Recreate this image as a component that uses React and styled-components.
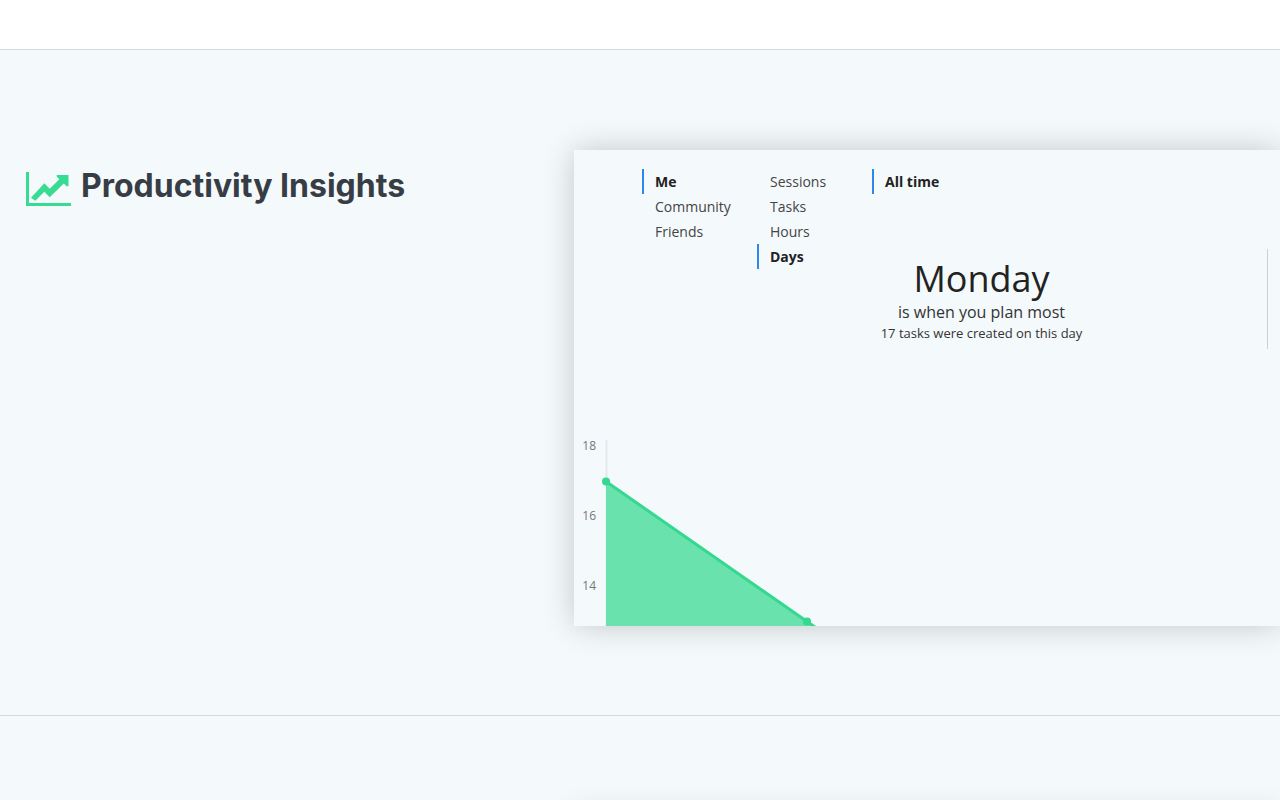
import React, { useState } from "react";
import styled, { createGlobalStyle } from "styled-components";

const filters = [
  { name: "people", options: ["Me", "Community", "Friends"], active: "Me" },
  {
    name: "metric",
    options: ["Sessions", "Tasks", "Hours", "Days"],
    active: "Days",
  },
  { name: "period", options: ["All time"], active: "All time" },
];

const axisLabels = [
  { value: 18, y: 20 },
  { value: 16, y: 90 },
  { value: 14, y: 160 },
];

const GlobalStyle = createGlobalStyle`
  * {
    box-sizing: border-box;
  }
  body {
    margin: 0;
    background-color: #f4f9fc;
    color: #222;
    font-family: "Open Sans", sans-serif;
  }
`;

const Page = styled.div`
  display: flex;
  flex-direction: column;
  height: 100vh;
  overflow: hidden;
`;

const TopBar = styled.header`
  flex: none;
  height: 49px;
  background-color: #fff;
`;

const Section = styled.section`
  flex: none;
  display: grid;
  grid-template-columns: 550px minmax(0, 1fr);
  align-items: start;
  padding: 100px 0 89px 24px;
  border-top: 1px solid #d5dce0;
`;

const Heading = styled.div`
  display: flex;
  align-items: flex-start;
  gap: 10px;
  padding: 14px 0 0 2px;

  svg {
    flex: none;
    margin-top: 8px;
  }
`;

const Title = styled.h2`
  margin: 0;
  color: #373d44;
  font-family: Inter, sans-serif;
  font-size: 32px;
  font-weight: 700;
  line-height: 44px;
`;

const Panel = styled.div`
  grid-column: 2;
  height: 476px;
  overflow: hidden;
  background-color: #f4f9fc;
  box-shadow: 0 0 30px rgba(0, 0, 0, 0.2);
`;

const Filters = styled.div`
  position: relative;
  z-index: 1;
  display: flex;
  align-items: flex-start;
  padding: 19px 0 0 68px;
`;

const FilterGroup = styled.div`
  display: flex;
  flex-direction: column;
  align-items: flex-start;
  width: 115px;
`;

const FilterButton = styled.button`
  height: 25px;
  padding: 0 0 0 11px;
  border: 0;
  border-left: 2px solid ${({ $active }) => ($active ? "#2f86eb" : "transparent")};
  background: none;
  color: ${({ $active }) => ($active ? "#222" : "#444")};
  font-family: inherit;
  font-size: 14px;
  font-weight: ${({ $active }) => ($active ? 700 : 400)};
  line-height: 25px;
  cursor: pointer;
`;

/* the summary starts level with the last filter row */
const Summary = styled.div`
  height: 100px;
  margin: -20px 12px 0 122px;
  padding-top: 5px;
  border-right: 1px solid #ccd1d4;
  text-align: center;

  p {
    margin: 0;
  }
`;

const SummaryDay = styled.p`
  font-size: 36px;
  line-height: 50px;
`;

const SummaryText = styled.p`
  color: #333;
  font-size: 16px;
  line-height: 16px;
`;

const SummaryNote = styled.p`
  color: #333;
  font-size: 13px;
  line-height: 26px;
`;

const Chart = styled.svg`
  display: block;
  width: 100%;
  height: 196px;
  margin-top: 81px;

  text {
    fill: #777;
    font-size: 12px;
    text-anchor: end;
  }
`;

const ChartIcon = () => (
  <svg width="45" height="34" viewBox="0 0 45 34" fill="#37dc92" aria-hidden="true">
    <path d="M0 0H3V31H45V34H0Z" />
    <path d="M5 25.7L18.3 11.3L23.7 16.7L33.3 7.3L30.8 4.8V3H42.5V14.3H40.6L37.8 11.6L23.7 25.3L18.3 19.7L9.3 28.7Z" />
  </svg>
);

const FilterColumn = ({ filter }) => {
  const [active, setActive] = useState(filter.active);
  return (
    <FilterGroup role="group" aria-label={filter.name}>
      {filter.options.map((option) => (
        <FilterButton
          key={option}
          type="button"
          $active={option === active}
          aria-pressed={option === active}
          onClick={() => setActive(option)}
        >
          {option}
        </FilterButton>
      ))}
    </FilterGroup>
  );
};

const DaysChart = () => (
  <Chart role="img" aria-label="Tasks per day">
    {axisLabels.map(({ value, y }) => (
      <text key={value} x="22" y={y}>
        {value}
      </text>
    ))}
    <path d="M32.5 10V196" stroke="#e6e9eb" strokeWidth="2" />
    <path d="M32 51.5L233 191.5L333 261.5H32Z" fill="#69e2ad" />
    <path d="M32 51.5L233 191.5L333 261.5" fill="none" stroke="#34d88f" strokeWidth="3" />
    <circle cx="32" cy="51.5" r="4" fill="#34d88f" />
    <circle cx="233" cy="191.5" r="4" fill="#34d88f" />
  </Chart>
);

const App = () => {
  return (
    <>
      <GlobalStyle />
      <Page>
        <TopBar />
        <Section>
          <Heading>
            <ChartIcon />
            <Title>Productivity Insights</Title>
          </Heading>
          <Panel>
            <Filters>
              {filters.map((filter) => (
                <FilterColumn key={filter.name} filter={filter} />
              ))}
            </Filters>
            <Summary>
              <SummaryDay>Monday</SummaryDay>
              <SummaryText>is when you plan most</SummaryText>
              <SummaryNote>17 tasks were created on this day</SummaryNote>
            </Summary>
            <DaysChart />
          </Panel>
        </Section>
        <Section>
          <Panel />
        </Section>
      </Page>
    </>
  );
};

export default App;
